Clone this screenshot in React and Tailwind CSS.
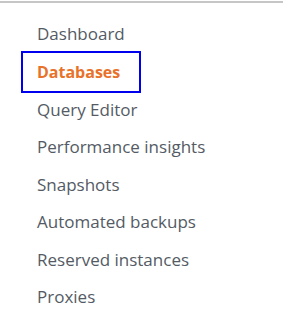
export default function App() {
  const items = [
    "Dashboard",
    "Databases",
    "Query Editor",
    "Performance insights",
    "Snapshots",
    "Automated backups",
    "Reserved instances",
    "Proxies",
  ];
  return (
    <div className="w-[284px] h-[319px] bg-white pt-[1px]" style={{ fontFamily: '"Open Sans", sans-serif' }}>
      <div className="w-[283px] h-[2px] bg-[#c6c6c6]" />
      <ul className="flex flex-col pt-[12px] pl-[21px]">
        {items.map((it) =>
          it === "Databases" ? (
            <li key={it} className="h-[38px] flex items-center">
              <span className="w-[120px] h-[42px] border-2 border-[#0000ee] flex items-center pl-[14px] text-[16px] font-bold text-[#e8722a]">
                {it}
              </span>
            </li>
          ) : (
            <li key={it} className="h-[37.5px] flex items-center pl-[16px] text-[17px] text-[#545b64]">
              {it}
            </li>
          )
        )}
      </ul>
    </div>
  );
}
